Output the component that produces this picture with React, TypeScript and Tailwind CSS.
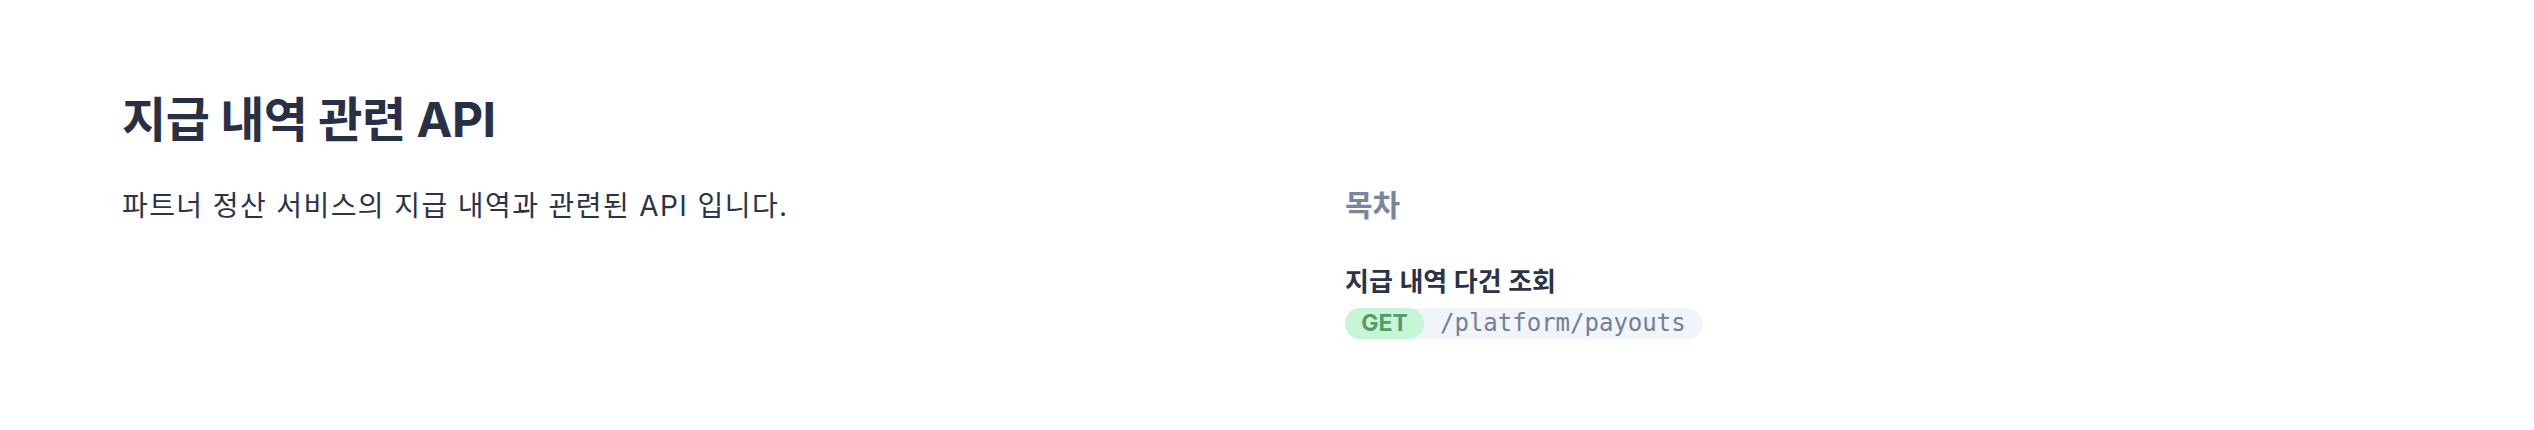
import React from "react";

const sans = "font-['Inter','Noto_Sans_CJK_KR',sans-serif]";

const TocItem = ({ title, method, path }: { title: string; method: string; path: string }) => {
  return (
    <div>
      <p className="text-[26px] leading-[34px] font-semibold text-[#2a3348]">{title}</p>
      <div className="mt-[9px] inline-flex items-center rounded-full bg-[#f1f4f8] pr-[17px]">
        <span className="flex h-[31px] w-[79px] items-center justify-center rounded-full bg-[#c6f6d5] text-[23px] font-bold text-[#559a6a]">
          {method}
        </span>
        <span className="ml-[16px] font-['DejaVu_Sans_Mono',monospace] text-[24px] leading-[31px] text-[#718096]">
          {path}
        </span>
      </div>
    </div>
  );
};

export default function App() {
  return (
    <div className={`${sans} min-h-[430px] w-full bg-white px-[122px] pt-[91px]`}>
      <h1 className="text-[48px] leading-[58px] font-bold tracking-[-0.5px] text-[#283045]">지급 내역 관련 API</h1>

      <div className="mt-[38px] flex">
        {/* description */}
        <div className="w-[1223px] shrink-0">
          <p className="text-[28px] leading-[39px] tracking-[1.4px] text-[#2a3348]">파트너 정산 서비스의 지급 내역과 관련된 API 입니다.</p>
        </div>

        {/* table of contents */}
        <div className="flex-1">
          <h2 className="text-[30px] leading-[36px] font-bold text-[#7886a3]">목차</h2>
          <div className="mt-[42px]">
            <TocItem title="지급 내역 다건 조회" method="GET" path="/platform/payouts" />
          </div>
        </div>
      </div>
    </div>
  );
}
